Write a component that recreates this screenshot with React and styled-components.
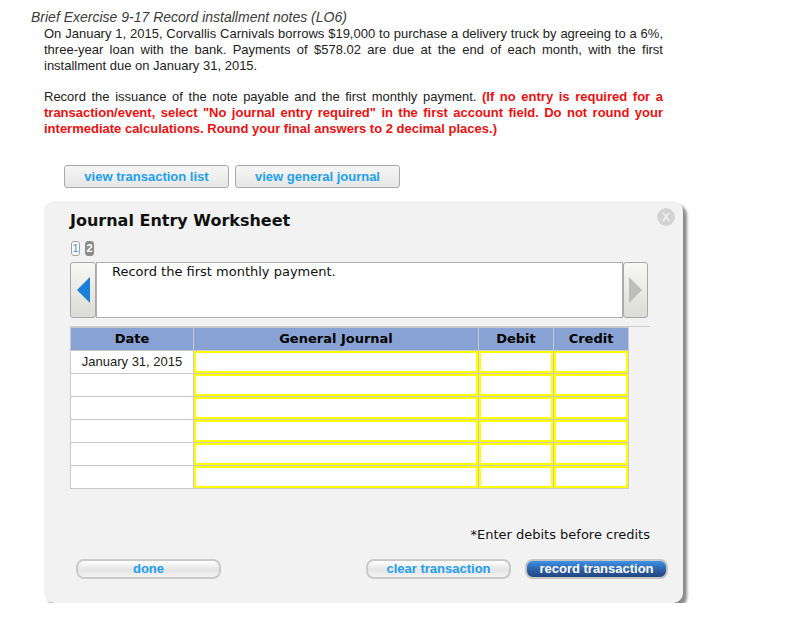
import React from "react";
import styled, { createGlobalStyle } from "styled-components";

const GlobalStyle = createGlobalStyle`
  html, body {
    margin: 0;
    padding: 0;
    background: #ffffff;
  }
  body {
    font-family: "Liberation Sans", Arial, sans-serif;
  }
`;

const Page = styled.div`
  padding: 9px 0 0 31px;
  width: 776px;
`;

const ExerciseTitle = styled.div`
  font-style: italic;
  font-size: 14px;
  line-height: 16px;
  color: #3c3c3c;
`;

const Question = styled.div`
  margin-left: 13px;
  width: 619px;
  font-size: 13px;
  line-height: 16px;
  color: #222;
  text-align: justify;
`;

const Para = styled.p`
  margin: ${({ first }) => (first ? "1px 0 0" : "15px 0 0")};
`;

const Red = styled.span`
  color: #f00f0f;
  font-weight: bold;
`;

const TopButtons = styled.div`
  display: flex;
  gap: 6px;
  margin: 28px 0 0 33px;
`;

const GreyButton = styled.button`
  width: 165px;
  height: 23px;
  padding: 0;
  border: 1px solid #a9a9a9;
  border-radius: 3px;
  background: linear-gradient(#f6f6f6, #e6e6e6);
  color: #1f9ff0;
  font-family: "Liberation Sans", Arial, sans-serif;
  font-weight: bold;
  font-size: 13px;
`;

const Panel = styled.div`
  position: relative;
  box-sizing: border-box;
  margin: 13px 0 0 13px;
  width: 639px;
  height: 402px;
  padding: 10px 15px 0 26px;
  background: #f2f2f2;
  border-radius: 10px;
  box-shadow: 4px 4px 3px #8a8a8a;
  font-family: "DejaVu Sans", Verdana, sans-serif;
`;

const CloseButton = styled.div`
  position: absolute;
  top: 7px;
  right: 8px;
  width: 18px;
  height: 18px;
  border-radius: 50%;
  background: #d3d3d3;
  color: #fff;
  font-size: 11px;
  line-height: 18px;
  text-align: center;
  font-family: "Liberation Sans", Arial, sans-serif;
`;

const WorksheetTitle = styled.h2`
  margin: 0;
  font-size: 16px;
  line-height: 20px;
  font-weight: bold;
  color: #111;
`;

const Pager = styled.div`
  display: flex;
  gap: 5px;
  margin: 10px 0 0 1px;
`;

const PageTab = styled.div`
  box-sizing: border-box;
  width: 9px;
  height: 15px;
  border-radius: 3px;
  border: 1px solid ${({ active }) => (active ? "#8c8c8c" : "#a0a0a0")};
  background: ${({ active }) => (active ? "#8c8c8c" : "#ffffff")};
  color: ${({ active }) => (active ? "#ffffff" : "#2b8ff0")};
  font-family: "Liberation Sans", Arial, sans-serif;
  font-size: 11px;
  font-weight: ${({ active }) => (active ? "bold" : "normal")};
  line-height: 13px;
  text-align: center;
`;

const InstructionRow = styled.div`
  display: flex;
  margin-top: 6px;
  height: 56px;
  width: 578px;
`;

const ArrowButton = styled.div`
  box-sizing: border-box;
  width: ${({ right }) => (right ? "25px" : "26px")};
  height: 56px;
  border: 1px solid #a8a8a8;
  border-radius: 3px;
  background: linear-gradient(#f7f7f5, #dcdcd6);
  display: flex;
  align-items: center;
  justify-content: center;
`;

const InstructionText = styled.div`
  box-sizing: border-box;
  flex: 1;
  border: 1px solid #b0b0b0;
  background: #fff;
  padding: 1px 15px;
  font-size: 13px;
  line-height: 16px;
  color: #111;
`;

const Divider = styled.div`
  margin-top: 8px;
  width: 580px;
  height: 1px;
  background: #cfcfcf;
`;

const Grid = styled.div`
  display: grid;
  grid-template-columns: 122px 284px 74px 74px;
  grid-auto-rows: 22px;
  gap: 1px;
  width: max-content;
  padding: 1px;
  background: #c9c9c9;
`;

const HeadCell = styled.div`
  background: #88a3d3;
  color: #000;
  font-weight: bold;
  font-size: 13px;
  line-height: 22px;
  text-align: center;
`;

const DateCell = styled.div`
  background: #fff;
  font-family: "Liberation Sans", Arial, sans-serif;
  font-size: 13px;
  line-height: 22px;
  text-align: center;
  color: #222;
`;

const InputCell = styled.div`
  box-sizing: border-box;
  background: #fff;
  border: 2px solid #ffff00;
`;

const Note = styled.div`
  width: 580px;
  margin-top: 38px;
  text-align: right;
  font-size: 13px;
  line-height: 16px;
  color: #111;
`;

const BottomBar = styled.div`
  display: flex;
  justify-content: space-between;
  margin: 16px 0 0 6px;
`;

const RightGroup = styled.div`
  display: flex;
  gap: 14px;
`;

const PillButton = styled.button`
  box-sizing: border-box;
  width: ${({ w }) => w}px;
  height: 20px;
  padding: 0;
  border-radius: 8px;
  border: 2px solid ${({ primary }) => (primary ? "#c4c4c4" : "#cacaca")};
  background: ${({ primary }) =>
    primary
      ? "linear-gradient(#3d92e6, #2c5fa8 55%, #22467f)"
      : "linear-gradient(#ffffff, #e4e4e4 55%, #f3f3f3)"};
  color: ${({ primary }) => (primary ? "#ffffff" : "#1f9ff0")};
  font-family: "Liberation Sans", Arial, sans-serif;
  font-weight: bold;
  font-size: 13px;
  line-height: 16px;
`;

const rows = ["January 31, 2015", "", "", "", "", ""];

const App = () => {
  return (
    <>
      <GlobalStyle />
      <Page>
        <ExerciseTitle>Brief Exercise 9-17 Record installment notes (LO6)</ExerciseTitle>
        <Question>
          <Para first>
            On January 1, 2015, Corvallis Carnivals borrows $19,000 to purchase a delivery truck by agreeing to a 6%,
            three-year loan with the bank. Payments of $578.02 are due at the end of each month, with the first
            installment due on January 31, 2015.
          </Para>
          <Para>
            Record the issuance of the note payable and the first monthly payment.{" "}
            <Red>
              (If no entry is required for a transaction/event, select "No journal entry required" in the first
              account field. Do not round your intermediate calculations. Round your final answers to 2 decimal
              places.)
            </Red>
          </Para>
        </Question>

        <TopButtons>
          <GreyButton>view transaction list</GreyButton>
          <GreyButton>view general journal</GreyButton>
        </TopButtons>

        <Panel>
          <CloseButton>X</CloseButton>
          <WorksheetTitle>Journal Entry Worksheet</WorksheetTitle>
          <Pager>
            <PageTab>1</PageTab>
            <PageTab active>2</PageTab>
          </Pager>

          <InstructionRow>
            <ArrowButton>
              <svg width="13" height="26" viewBox="0 0 13 26">
                <polygon points="13,0 13,26 0,13" fill="#1b7ed8" />
              </svg>
            </ArrowButton>
            <InstructionText>Record the first monthly payment.</InstructionText>
            <ArrowButton right>
              <svg width="13" height="26" viewBox="0 0 13 26">
                <polygon points="0,0 0,26 13,13" fill="#bdbdbd" />
              </svg>
            </ArrowButton>
          </InstructionRow>

          <Divider />
          <Grid>
            <HeadCell>Date</HeadCell>
            <HeadCell>General Journal</HeadCell>
            <HeadCell>Debit</HeadCell>
            <HeadCell>Credit</HeadCell>
            {rows.map((d, i) => (
              <React.Fragment key={i}>
                <DateCell>{d}</DateCell>
                <InputCell />
                <InputCell />
                <InputCell />
              </React.Fragment>
            ))}
          </Grid>

          <Note>*Enter debits before credits</Note>

          <BottomBar>
            <PillButton w={145}>done</PillButton>
            <RightGroup>
              <PillButton w={145}>clear transaction</PillButton>
              <PillButton w={143} primary>record transaction</PillButton>
            </RightGroup>
          </BottomBar>
        </Panel>
      </Page>
    </>
  );
};

export default App;
